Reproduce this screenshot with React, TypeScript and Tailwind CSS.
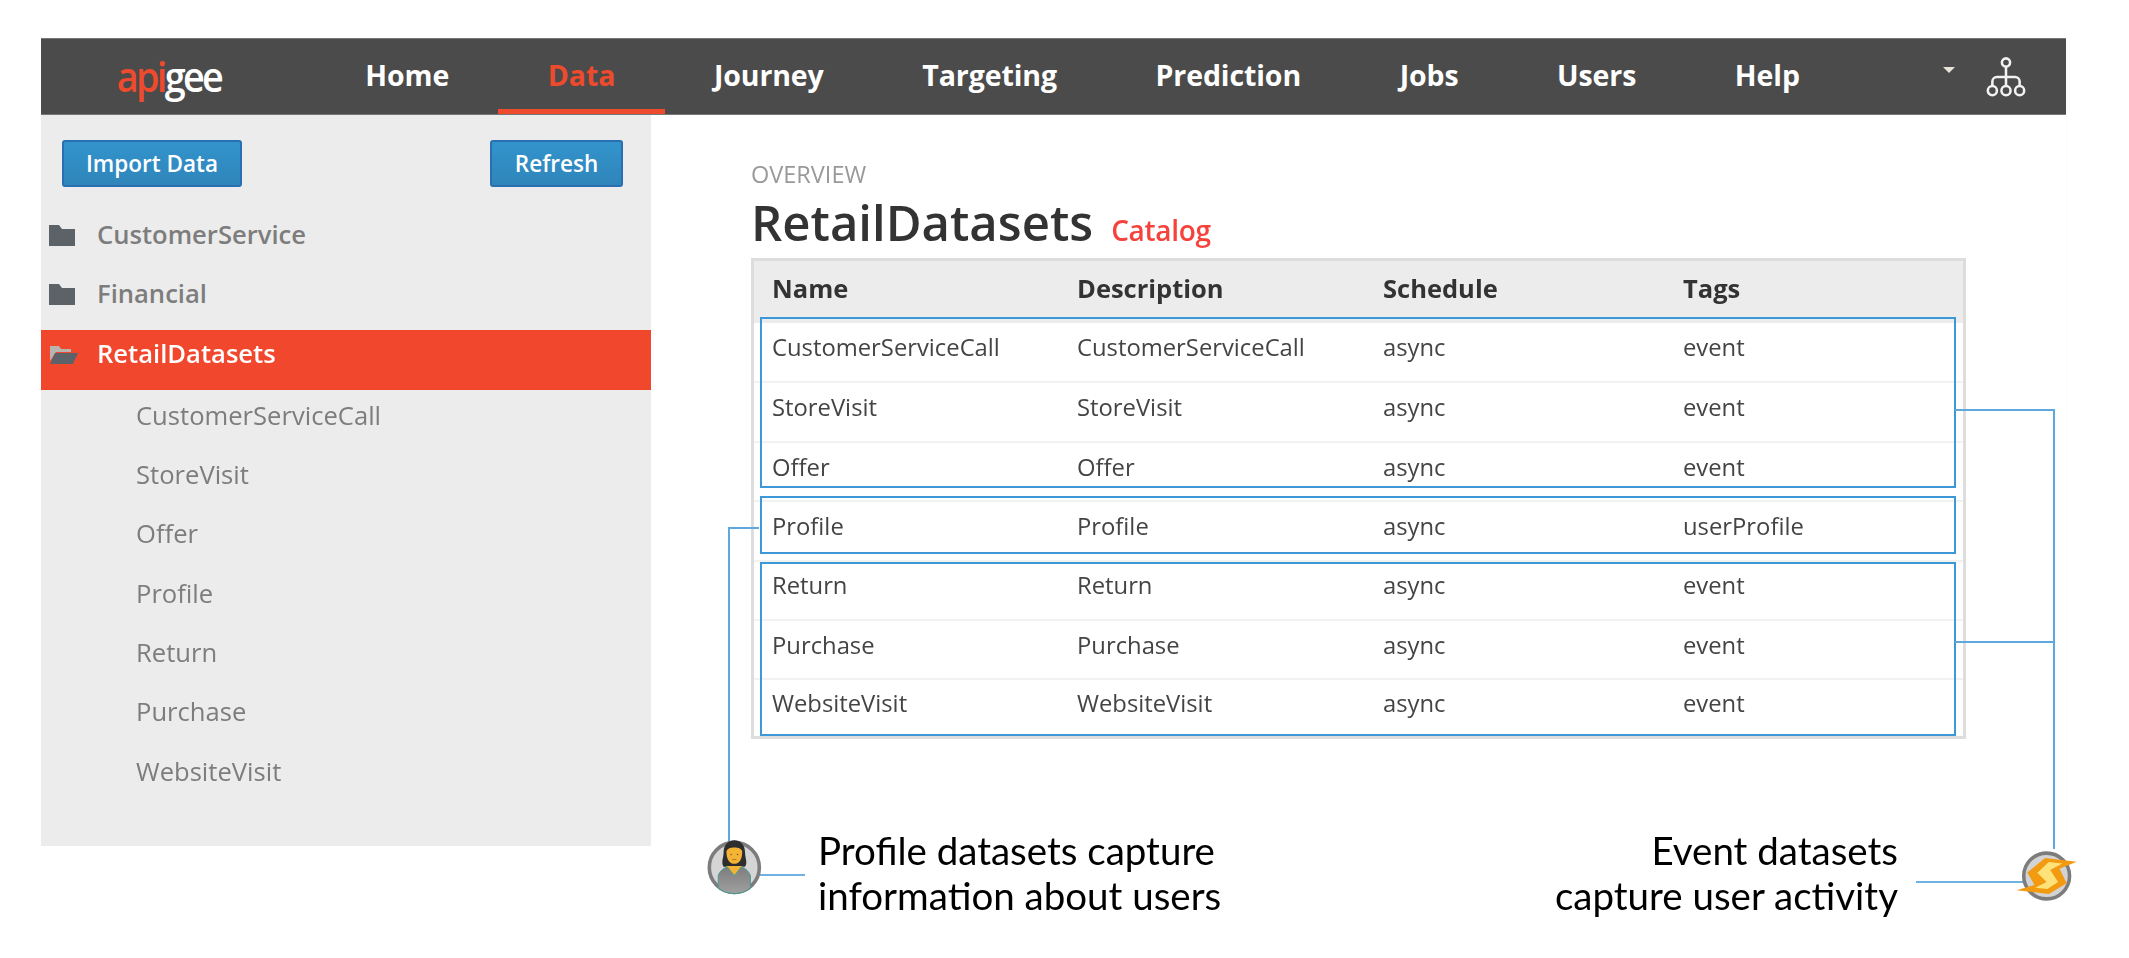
const navItems = ["Home", "Data", "Journey", "Targeting", "Prediction", "Jobs", "Users", "Help"];
const folders = ["CustomerService", "Financial"];
const children = ["CustomerServiceCall", "StoreVisit", "Offer", "Profile", "Return", "Purchase", "WebsiteVisit"];
const rows = children.map((name) => ({ name, tag: name === "Profile" ? "userProfile" : "event" }));

function FolderIcon({ open }: { open?: boolean }) {
  if (open) {
    return (
      <svg width="30" height="22" viewBox="0 0 30 22" className="shrink-0">
        <path d="M1 3h9l2 3h10v3H7L1 18z" fill="#b9b4b0" />
        <path d="M6 10h23l-5 11H1z" fill="#5b6368" />
      </svg>
    );
  }
  return (
    <svg width="26" height="22" viewBox="0 0 26 22" className="shrink-0">
      <path d="M0 1h10l3 4h13v17H0z" fill="#5b6368" />
    </svg>
  );
}

function OrgIcon() {
  return (
    <svg width="40" height="40" viewBox="0 0 44 44" fill="none" stroke="#f2f2f2" strokeWidth="2.8">
      <circle cx="22" cy="6" r="4.5" />
      <path d="M22 11v21M7 32v-5a5 5 0 0 1 5-5h20a5 5 0 0 1 5 5v5" />
      <circle cx="7" cy="37" r="5" />
      <circle cx="22" cy="37" r="5" />
      <circle cx="37" cy="37" r="5" />
    </svg>
  );
}

function ProfileAvatar() {
  return (
    <svg width="59" height="61" viewBox="70 50 165 170">
      <defs>
        <linearGradient id="shirt" x1="0" y1="0" x2="0" y2="1">
          <stop offset="0" stopColor="#7d7d7d" />
          <stop offset="1" stopColor="#a0a0a0" />
        </linearGradient>
      </defs>
      <circle cx="152" cy="132" r="70" fill="#d5d5d5" stroke="#7c7c7c" strokeWidth="10" />
      <path d="M122 90C122 45 182 45 182 90 182 105 190 118 182 130L122 130C114 118 122 105 122 90z" fill="#2e2e2e" />
      <path d="M130 88C130 72 174 72 174 88 174 112 164 122 152 122 140 122 130 112 130 88z" fill="#f5b335" />
      <path d="M128 128h48l-24 28z" fill="#f5b335" />
      <path d="M107 155C112 140 124 134 132 130L152 155 172 130C180 134 192 140 197 155L197 190A72 72 0 0 1 107 190z" fill="url(#shirt)" stroke="#3f9a8c" strokeWidth="2.5" />
      <circle cx="143" cy="96" r="2" fill="#7a4a10" />
      <circle cx="161" cy="96" r="2" fill="#7a4a10" />
      <path d="M146 110h12" stroke="#7a4a10" strokeWidth="1.5" />
    </svg>
  );
}

function EventBadge() {
  return (
    <svg width="68" height="54" viewBox="1380 80 190 150">
      <circle cx="1474" cy="155" r="64" fill="#d3d3d3" stroke="#7c7c7c" strokeWidth="10" />
      <path d="M1470 105L1558 115 1510 135 1530 175 1480 205 1390 195 1440 180 1420 145z" fill="#f29a10" />
      <path d="M1480 116L1518 120 1484 138 1506 172 1476 191 1442 188 1474 172 1448 146z" fill="#fde27a" />
    </svg>
  );
}

export default function App() {
  return (
    <div className="relative min-h-[958px] bg-white pt-[38px] pl-[41px] font-['Open_Sans',sans-serif]">
      <div className="w-[2027px] border-r-2 border-[#fdfdf9] blur-[0.5px]">
        <nav className="flex h-[77px] items-stretch border-t border-b border-[#777777] bg-[#4b4b4b]">
          <div className="flex w-[275px] items-center justify-center pr-[20px] pb-[2px] text-[42px] leading-none font-semibold tracking-[-3px]">
            <div className="scale-x-90">
              <span className="text-[#ee4a2d]">api</span>
              <span className="text-white">gee</span>
            </div>
          </div>
          {navItems.map((item) => (
            <a
              key={item}
              className={
                item === "Data"
                  ? "flex items-center border-b-[5px] border-[#ee4a2d] px-[49.3px] pt-[3px] text-[28.5px] font-bold tracking-[-0.1px] text-[#ee4a2d]"
                  : "flex items-center border-b-[5px] border-transparent px-[49.3px] pt-[3px] text-[28.5px] font-bold tracking-[-0.1px] text-white"
              }
            >
              {item}
            </a>
          ))}
          <div className="ml-auto flex items-center gap-[31px] pr-[40px]">
            <div className="mb-[14px] h-0 w-0 border-x-[6px] border-t-[6px] border-x-transparent border-t-[#e8e4da]" />
            <OrgIcon />
          </div>
        </nav>

        <div className="flex">
          <aside className="h-[731px] w-[610px] bg-[#ececec] pt-[25px]">
            <div className="flex justify-between pr-[28px] pl-[21px]">
              <button className="flex h-[47px] w-[180px] items-center justify-center rounded-[3px] border-2 border-[#2b6fb3] bg-gradient-to-b from-[#3294cc] to-[#2f85ba] text-[22.5px] font-semibold text-white">
                Import Data
              </button>
              <button className="flex h-[47px] w-[133px] items-center justify-center rounded-[3px] border-2 border-[#2b6fb3] bg-gradient-to-b from-[#3294cc] to-[#2f85ba] text-[22.5px] font-semibold text-white">
                Refresh
              </button>
            </div>
            <ul className="mt-[18px]">
              {folders.map((f) => (
                <li key={f} className="flex h-[59.5px] items-center gap-[22px] pl-[8px] text-[25.6px] font-semibold text-[#7d7d7d]">
                  <FolderIcon />
                  {f}
                </li>
              ))}
              <li className="mt-[6px] flex h-[60px] items-center gap-[18px] bg-[#f0472d] pb-[12px] pl-[8px] text-[25.6px] font-semibold text-white">
                <FolderIcon open />
                RetailDatasets
              </li>
            </ul>
            <ul className="-mt-[4px]">
              {children.map((c) => (
                <li key={c} className="flex h-[59.4px] items-center pl-[95px] text-[25.6px] text-[#7d7d7d]">
                  {c}
                </li>
              ))}
            </ul>
          </aside>

          <main className="flex-1 pt-[44px] pl-[100px]">
            <div className="text-[23.5px] leading-[30px] text-[#999999]">OVERVIEW</div>
            <h1 className="mt-[2px] flex items-baseline gap-[18px] text-[49px] leading-[62px] font-semibold text-[#333333]">
              RetailDatasets
              <span className="text-[28px] tracking-[-0.3px] text-[#f5433c]">Catalog</span>
            </h1>

            <div className="relative -mt-[3px] w-[1215px] border-[3px] border-[#dddddd]">
              <table className="w-full table-fixed border-collapse text-left">
                <thead>
                  <tr className="h-[62px] bg-[#ececec] text-[25.5px] text-[#333333]">
                    <th className="w-[305px] pb-[8px] pl-[18px] font-bold">Name</th>
                    <th className="w-[306px] pb-[8px] pl-[18px] font-bold">Description</th>
                    <th className="w-[300px] pb-[8px] pl-[18px] font-bold">Schedule</th>
                    <th className="pb-[8px] pl-[18px] font-bold">Tags</th>
                  </tr>
                </thead>
                <tbody>
                  {rows.map((r) => (
                    <tr key={r.name} className="h-[59.4px] border-b-2 border-[#f2f2f2] text-[23.8px] text-[#444444] last:h-[56.4px] last:border-b-0">
                      <td className="pb-[8px] pl-[18px]">{r.name}</td>
                      <td className="pb-[8px] pl-[18px]">{r.name}</td>
                      <td className="pb-[8px] pl-[18px]">async</td>
                      <td className="pb-[8px] pl-[18px]">{r.tag}</td>
                    </tr>
                  ))}
                </tbody>
              </table>
              <div className="absolute top-[56px] left-[6px] h-[171px] w-[1196px] border-2 border-[#3d98d8]" />
              <div className="absolute top-[235px] left-[6px] h-[58px] w-[1196px] border-2 border-[#3d98d8]" />
              <div className="absolute top-[301px] left-[6px] h-[174px] w-[1196px] border-2 border-[#3d98d8]" />
            </div>
          </main>
        </div>
      </div>

      {/* callout lines */}
      <div className="absolute top-[527px] left-[728px] h-[318px] w-[31px] border-t-2 border-l-2 border-[#5fa8dd]" />
      <div className="absolute top-[874px] left-[760px] h-[2px] w-[45px] bg-[#6fb1e3]" />
      <div className="absolute top-[409px] left-[1955px] h-[440px] w-[100px] border-t-2 border-r-2 border-[#5fa8dd]" />
      <div className="absolute top-[641px] left-[1955px] h-[2px] w-[100px] bg-[#5fa8dd]" />
      <div className="absolute top-[881px] left-[1916px] h-[2px] w-[110px] bg-[#6fb1e3]" />

      <div className="absolute top-[838px] left-[705px]">
        <ProfileAvatar />
      </div>
      <div className="absolute top-[849px] left-[2013px]">
        <EventBadge />
      </div>

      <div className="absolute top-[828px] left-[818px] font-['Lato',sans-serif] text-[38.5px] leading-[45px] text-black">
        Profile datasets capture
        <br />
        information about users
      </div>
      <div className="absolute top-[828px] right-[231px] text-right font-['Lato',sans-serif] text-[38.5px] leading-[45px] text-black">
        Event datasets
        <br />
        capture user activity
      </div>
    </div>
  );
}
